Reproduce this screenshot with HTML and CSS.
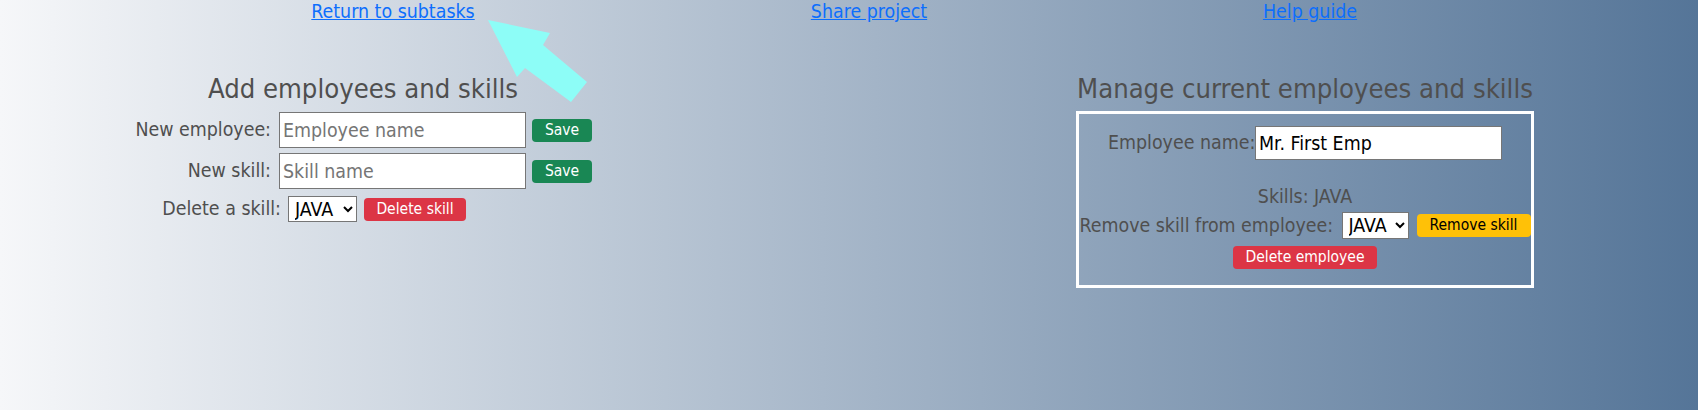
FILE: index.html
```html
<!DOCTYPE html>
<html lang="en">
<head>
<meta charset="utf-8">
<title>Employees and skills</title>
<link rel="stylesheet" href="styles.css">
</head>
<body>
<nav class="top-links">
  <a href="#">Return to subtasks</a>
  <a href="#">Share project</a>
  <a href="#">Help guide</a>
</nav>
<svg class="pointer-arrow" viewBox="480 14 112 92" aria-hidden="true">
  <polygon points="488,20 550,33 543,45 587,82 571,102 525,68 517,77" fill="#8dfdf7"/>
</svg>
<main class="panels">
  <section class="panel panel-add">
    <h2 class="panel-heading">Add employees and skills</h2>
    <div class="add-form">
      <div class="field-row">
        <label class="field-label">New employee:</label>
        <input class="text-input" type="text" placeholder="Employee name">
        <button class="btn btn-success btn-save">Save</button>
      </div>
      <div class="field-row field-row-skill">
        <label class="field-label">New skill:</label>
        <input class="text-input" type="text" placeholder="Skill name">
        <button class="btn btn-success btn-save">Save</button>
      </div>
      <div class="field-row field-row-delete">
        <label class="field-label field-label-wide">Delete a skill:</label>
        <select class="skill-select"><option>JAVA</option></select>
        <button class="btn btn-danger btn-delete-skill">Delete skill</button>
      </div>
    </div>
  </section>
  <section class="panel panel-manage">
    <h2 class="panel-heading">Manage current employees and skills</h2>
    <div class="manage-box">
      <div class="name-row">
        <label class="name-label">Employee name:</label>
        <input class="text-input name-input" type="text" value="Mr. First Emp">
      </div>
      <div class="skills-line">Skills: JAVA</div>
      <div class="remove-row">
        <label class="remove-label">Remove skill from employee:</label>
        <select class="skill-select skill-select-remove"><option>JAVA</option></select>
        <button class="btn btn-warning btn-remove-skill">Remove skill</button>
      </div>
      <button class="btn btn-danger btn-delete-employee">Delete employee</button>
    </div>
  </section>
</main>
</body>
</html>
```
FILE: styles.css
```css
* {
  box-sizing: border-box;
}

html,
body {
  margin: 0;
}

body {
  position: relative;
  min-height: 410px;
  background: linear-gradient(to right, #f6f7f9 0%, #557598 100%);
  font-family: "DejaVu Sans Condensed", "DejaVu Sans", sans-serif;
  font-size: 19.4px;
  line-height: 24px;
  color: #4f4f4f;
}

.top-links {
  display: flex;
  height: 24px;
  padding-left: 293px;
}

.top-links a {
  width: 200px;
  text-align: center;
  color: #0d6efd;
  text-decoration: underline;
  white-space: nowrap;
}

.top-links a:nth-child(2) {
  margin-left: 276px;
}

.top-links a:nth-child(3) {
  margin-left: 241px;
}

.pointer-arrow {
  position: absolute;
  left: 480px;
  top: 14px;
  width: 112px;
  height: 92px;
}

.panels {
  display: flex;
  align-items: flex-start;
  padding-top: 48px;
}

.panel-heading {
  margin: 0;
  font-size: 27.2px;
  line-height: 34px;
  font-weight: normal;
  text-align: center;
  color: #4f4f4f;
  white-space: nowrap;
}

.panel-add {
  width: 726px;
  display: flex;
  flex-direction: column;
}

.add-form {
  margin-top: 6px;
  padding-left: 135px;
  display: flex;
  flex-direction: column;
}

.field-row {
  display: flex;
  align-items: center;
  height: 36px;
}

.field-row-skill {
  margin-top: 5px;
}

.field-row-delete {
  margin-top: 7px;
  height: 26px;
}

.field-label {
  width: 136px;
  text-align: right;
  white-space: nowrap;
}

.field-label-wide {
  width: 146px;
}

.text-input {
  width: 247px;
  height: 36px;
  margin-left: 8px;
  padding: 0 3px;
  border: 1px solid #767676;
  border-radius: 0;
  background: #fff;
  font-family: inherit;
  font-size: 19.4px;
  color: #000;
}

.text-input::placeholder {
  color: #757575;
}

.btn {
  height: 23px;
  padding: 0;
  border: 0;
  border-radius: 4px;
  font-family: inherit;
  font-size: 15.5px;
  line-height: 23px;
  text-align: center;
  white-space: nowrap;
}

.btn-success {
  background: #198754;
  color: #fff;
}

.btn-danger {
  background: #dc3545;
  color: #fff;
}

.btn-warning {
  background: #ffc107;
  color: #000;
}

.btn-save {
  width: 60px;
  margin-left: 6px;
}

.skill-select {
  width: 69px;
  height: 26px;
  margin-left: 7px;
  padding: 0 0 0 2px;
  border: 1px solid #767676;
  border-radius: 0;
  background: #fff;
  font-family: inherit;
  font-size: 19.4px;
  color: #000;
}

.btn-delete-skill {
  width: 102px;
  margin-left: 7px;
}

.panel-manage {
  width: 458px;
  margin-left: 350px;
  display: flex;
  flex-direction: column;
}

.manage-box {
  margin-top: 5px;
  height: 177px;
  padding-top: 12px;
  border: 3px solid #fff;
  display: flex;
  flex-direction: column;
  align-items: center;
}

.name-row {
  display: flex;
  align-items: center;
  height: 34px;
}

.name-label {
  width: 145px;
  text-align: right;
  white-space: nowrap;
}

.name-input {
  height: 34px;
  margin-left: 2px;
}

.skills-line {
  margin-top: 25px;
}

.remove-row {
  margin-top: 3px;
  display: flex;
  align-items: center;
  height: 27px;
}

.remove-label {
  width: 253px;
  text-align: right;
  white-space: nowrap;
}

.skill-select-remove {
  width: 67px;
  height: 27px;
  margin-left: 9px;
}

.btn-remove-skill {
  width: 114px;
  margin-left: 8px;
}

.btn-delete-employee {
  width: 144px;
  margin-top: 7px;
}
```
